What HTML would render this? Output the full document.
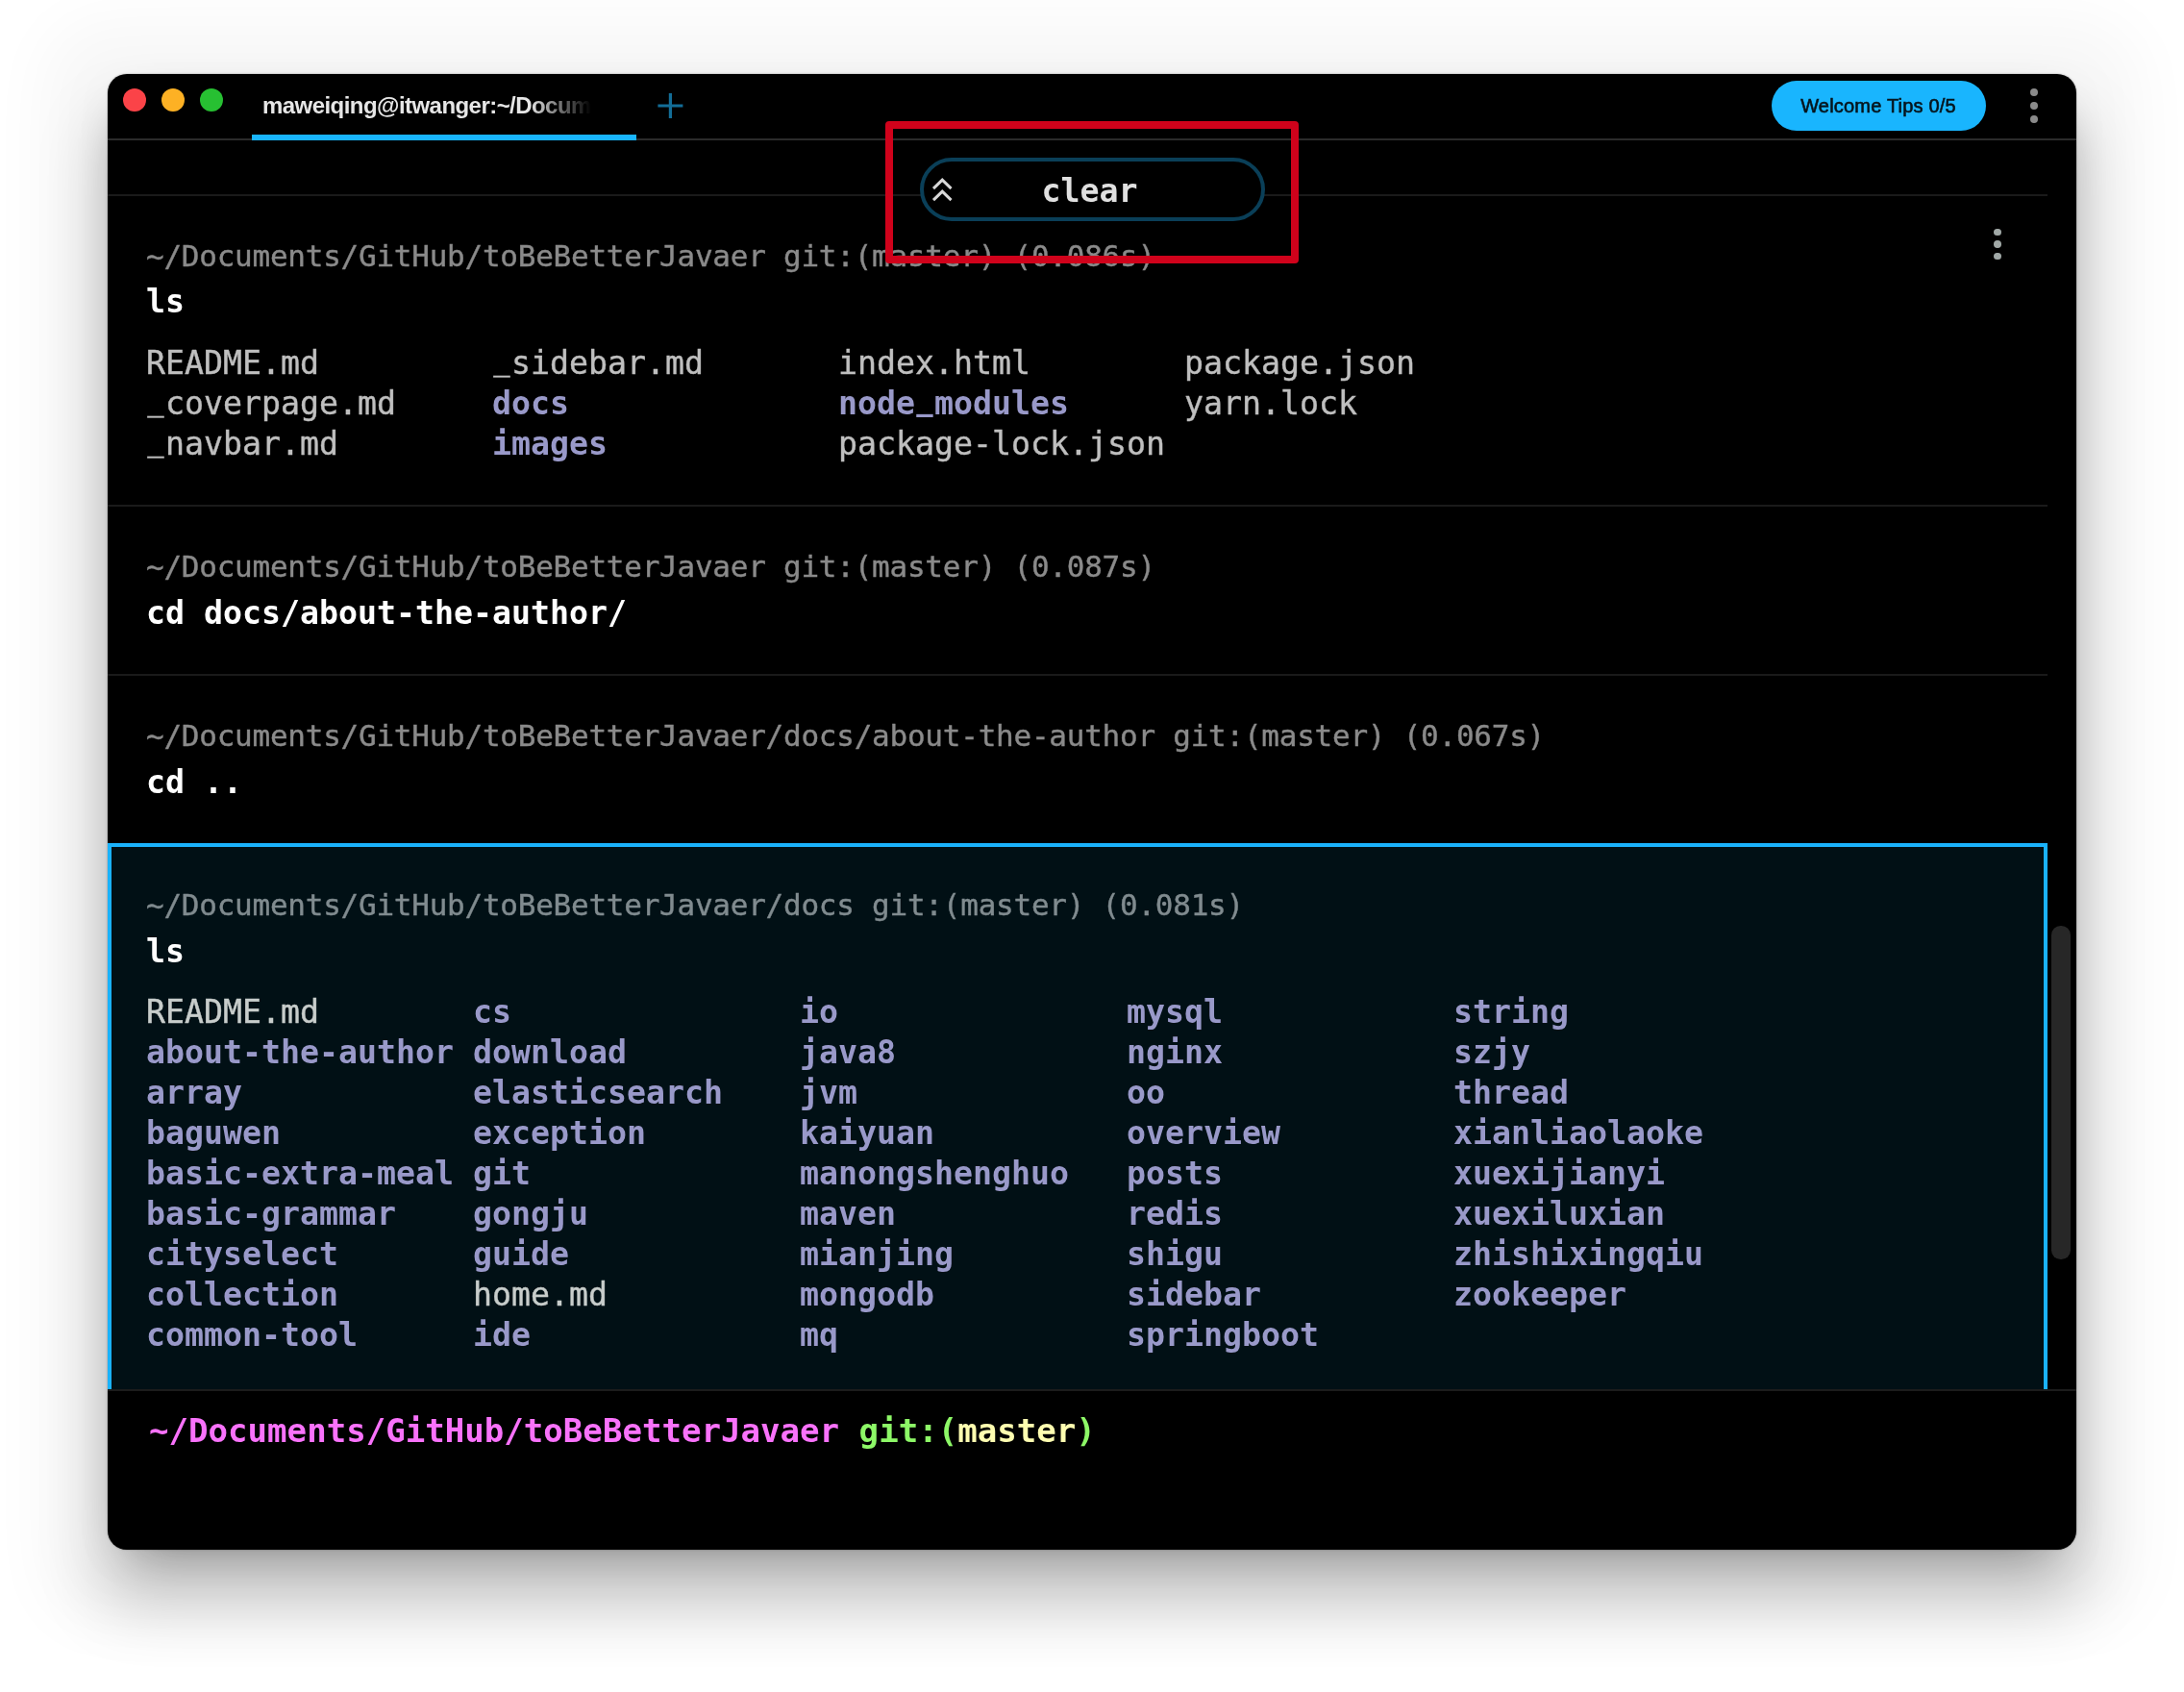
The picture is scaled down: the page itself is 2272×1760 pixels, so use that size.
<!DOCTYPE html>
<html lang="en">
<head>
<meta charset="utf-8">
<title>Warp terminal</title>
<style>
html,body{margin:0;padding:0;}
body{width:2272px;height:1760px;background:#fff;position:relative;overflow:hidden;font-family:"DejaVu Sans Mono","Liberation Mono",monospace;}
.abs{position:absolute;}
#win{position:absolute;left:112px;top:76.5px;width:2048px;height:1535.5px;background:#000;border-radius:20px;
 box-shadow:0 0 2px rgba(0,0,0,.4),0 10.7px 67.5px 65.7px rgba(0,0,0,.035),0 49.8px 68.2px 3.5px rgba(0,0,0,.213),0 18.7px 50px -30px rgba(0,0,0,.49);overflow:hidden;}
/* everything inside #win uses page coords via inner offset wrapper */
#in{will-change:transform;position:absolute;left:-112px;top:-76.5px;width:2272px;height:1760px;}
.dot{position:absolute;width:24px;height:24px;border-radius:50%;top:92px;}
.sans{font-family:"Liberation Sans",sans-serif;}
.ln{position:absolute;left:152px;white-space:pre;margin:0;}
.hd{font-size:31px;letter-spacing:-0.246px;line-height:40px;color:#8a8a8a;-webkit-text-stroke:0.4px currentColor;}
.cmd{font-size:33.22px;line-height:42px;color:#fff;font-weight:bold;}
.out{font-size:33.22px;line-height:42px;color:#bfbfbf;-webkit-text-stroke:0.4px currentColor;}
.out b{color:#9999c9;font-weight:bold;-webkit-text-stroke:0;}
.u{display:inline-block;font-style:normal;transform:translateY(-5.5px) scaleX(.87);}
.sep{position:absolute;left:112px;width:2018px;height:2px;background:#1a1a1a;}
.kd{position:absolute;border-radius:50%;}
</style>
</head>
<body>
<div id="win"><div id="in">

<!-- title bar -->
<div class="dot" style="left:128px;background:#fb4348"></div>
<div class="dot" style="left:168px;background:#fdb124"></div>
<div class="dot" style="left:208px;background:#27c032"></div>

<div class="abs sans" id="tabtitle" style="left:273px;top:93.5px;letter-spacing:-0.55px;width:345px;height:32px;overflow:hidden;white-space:nowrap;font-weight:bold;font-size:24px;line-height:32px;color:#e6e6e6;-webkit-mask-image:linear-gradient(to right,#000 0,#000 278px,transparent 342px);mask-image:linear-gradient(to right,#000 0,#000 278px,transparent 342px);">maweiqing@itwanger:~/Documents</div>

<div class="abs" style="left:112px;top:144px;width:2048px;height:2px;background:#2b2b2b"></div>
<div class="abs" style="left:262px;top:140px;width:400px;height:6px;background:#19b5fe"></div>

<svg class="abs" style="left:684px;top:97px" width="27" height="27" viewBox="0 0 27 27"><path d="M13.4 0v26M0.4 13h26" stroke="#136d97" stroke-width="3.2" fill="none"/></svg>

<div class="abs sans" id="tips" style="left:1842.5px;top:83.8px;width:223.1px;height:51.8px;border-radius:26px;background:#19b5fe;color:#06141c;font-size:20px;line-height:52px;text-align:center;letter-spacing:0.2px;-webkit-text-stroke:0.6px #06141c;">Welcome Tips 0/5</div>

<div class="kd" style="left:2112px;top:92px;width:8px;height:8px;background:#8a8a8a"></div>
<div class="kd" style="left:2112px;top:106px;width:8px;height:8px;background:#8a8a8a"></div>
<div class="kd" style="left:2112px;top:120px;width:8px;height:8px;background:#8a8a8a"></div>

<!-- block separators -->
<div class="sep" style="top:202px"></div>
<div class="sep" style="top:525px"></div>
<div class="sep" style="top:701px"></div>

<!-- block 1 -->
<div class="ln hd" style="top:245.6px">~/Documents/GitHub/toBeBetterJavaer git:(master) (0.086s)</div>
<div class="ln cmd" style="top:293px">ls</div>
<pre class="ln out" style="top:357px">README.md         <i class="u">_</i>sidebar.md       index.html        package.json
<i class="u">_</i>coverpage.md     <b>docs</b>              <b>node<i class="u">_</i>modules</b>      yarn.lock
<i class="u">_</i>navbar.md        <b>images</b>            package-lock.json</pre>

<div class="kd" style="left:2074.1px;top:237.6px;width:7.8px;height:7.8px;background:#a0a8a6"></div>
<div class="kd" style="left:2074.1px;top:249.9px;width:7.8px;height:7.8px;background:#a0a8a6"></div>
<div class="kd" style="left:2074.1px;top:262.5px;width:7.8px;height:7.8px;background:#a0a8a6"></div>

<!-- block 2 -->
<div class="ln hd" style="top:568.6px">~/Documents/GitHub/toBeBetterJavaer git:(master) (0.087s)</div>
<div class="ln cmd" style="top:617px">cd docs/about-the-author/</div>

<!-- block 3 -->
<div class="ln hd" style="top:744.6px">~/Documents/GitHub/toBeBetterJavaer/docs/about-the-author git:(master) (0.067s)</div>
<div class="ln cmd" style="top:793px">cd ..</div>

<!-- block 4 (selected) -->
<div class="abs" id="sel" style="left:112px;top:877px;width:2018px;height:569px;box-sizing:border-box;background:#011015;border:4px solid #1ab2fb;border-bottom:none;"></div>
<div class="abs" style="left:112px;top:1445px;width:2048px;height:2px;background:#1c1c1c"></div>
<div class="ln hd" style="top:920.6px;color:#808b8f">~/Documents/GitHub/toBeBetterJavaer/docs git:(master) (0.081s)</div>
<div class="ln cmd" style="top:969px">ls</div>
<pre class="ln out" style="top:1032px;color:#c8cdcb">README.md        <b>cs</b>               <b>io</b>               <b>mysql</b>            <b>string</b>
<b>about-the-author</b> <b>download</b>         <b>java8</b>            <b>nginx</b>            <b>szjy</b>
<b>array</b>            <b>elasticsearch</b>    <b>jvm</b>              <b>oo</b>               <b>thread</b>
<b>baguwen</b>          <b>exception</b>        <b>kaiyuan</b>          <b>overview</b>         <b>xianliaolaoke</b>
<b>basic-extra-meal</b> <b>git</b>              <b>manongshenghuo</b>   <b>posts</b>            <b>xuexijianyi</b>
<b>basic-grammar</b>    <b>gongju</b>           <b>maven</b>            <b>redis</b>            <b>xuexiluxian</b>
<b>cityselect</b>       <b>guide</b>            <b>mianjing</b>         <b>shigu</b>            <b>zhishixingqiu</b>
<b>collection</b>       home.md          <b>mongodb</b>          <b>sidebar</b>          <b>zookeeper</b>
<b>common-tool</b>      <b>ide</b>              <b>mq</b>               <b>springboot</b></pre>

<!-- scrollbar -->
<div class="abs" style="left:2134.4px;top:962.5px;width:19.4px;height:347.5px;border-radius:9.7px;background:#272727"></div>

<!-- prompt -->
<div class="ln" id="prompt" style="left:155px;top:1466px;font-size:34.1px;line-height:44px;font-weight:bold;color:#f972fb">~/Documents/GitHub/toBeBetterJavaer <span style="color:#8df867">git:(</span><span style="color:#fefdb0">master</span><span style="color:#8df867">)</span></div>

<!-- clear pill -->
<div class="abs" id="pill" style="left:956.5px;top:164px;width:359px;height:65.8px;box-sizing:border-box;border:4px solid #0a3f58;border-radius:33px;background:#000"></div>
<svg class="abs" style="left:966px;top:182px" width="30" height="30" viewBox="0 0 30 30"><path d="M5 14.2L14.25 5.2L23.5 14.2M5 26.2L14.25 17.2L23.5 26.2" stroke="#d8d8d8" stroke-width="3" fill="none"/></svg>
<div class="ln cmd" id="clear" style="left:1083.5px;top:177.5px;color:#e0e0e0">clear</div>

<!-- red annotation -->
<div class="abs" id="red" style="left:921.3px;top:126.3px;width:430.2px;height:148.2px;box-sizing:border-box;border:8px solid #d0021b;border-radius:4px"></div>

</div></div>
</body>
</html>
